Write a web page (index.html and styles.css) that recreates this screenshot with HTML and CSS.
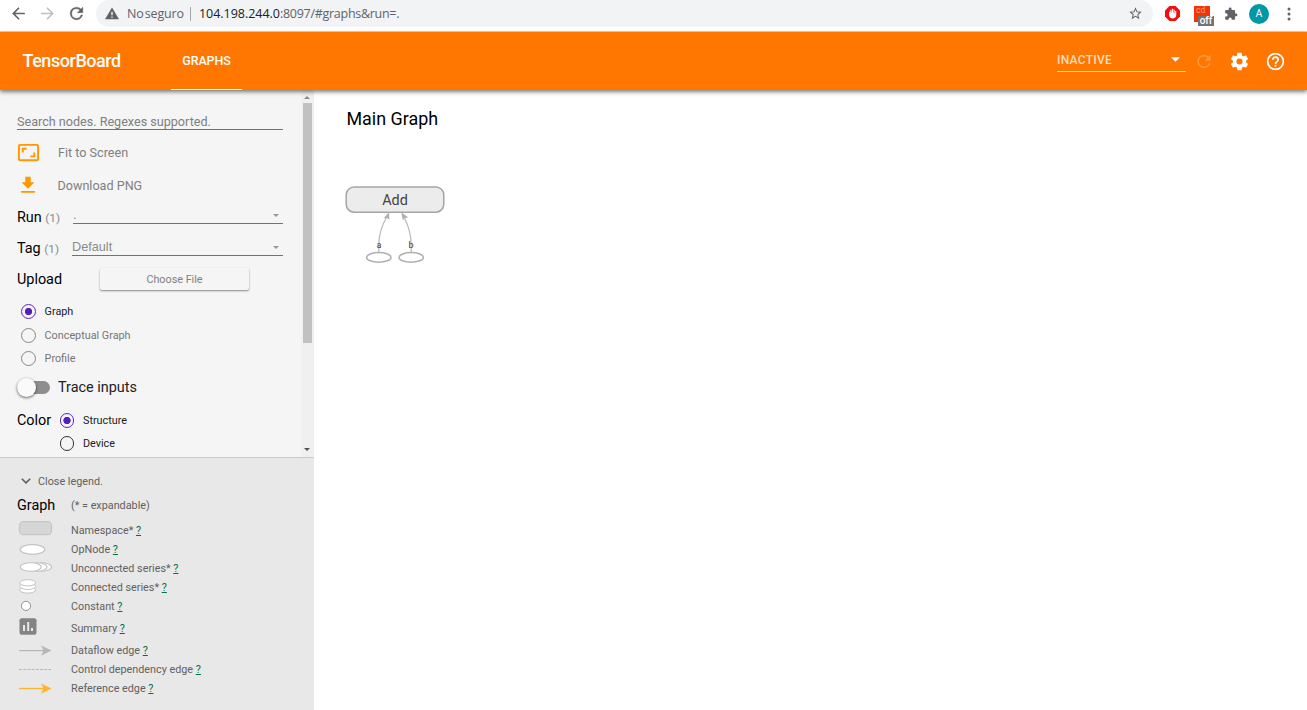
FILE: index.html
```html
<!DOCTYPE html>
<html lang="en">
<head>
<meta charset="utf-8">
<title>TensorBoard</title>
<link rel="stylesheet" href="styles.css">
</head>
<body>
<div class="browser">
  <svg class="nav-icon" viewBox="0 0 24 24"><path fill="#5f6368" d="M20 11H7.83l5.59-5.59L12 4l-8 8 8 8 1.41-1.41L7.83 13H20z"/></svg>
  <svg class="nav-icon" viewBox="0 0 24 24"><path fill="#bdc1c6" d="M12 4l-1.41 1.41L16.17 11H4v2h12.17l-5.58 5.59L12 20l8-8z"/></svg>
  <svg class="nav-icon" viewBox="0 0 24 24"><path fill="#5f6368" stroke="#5f6368" stroke-width=".5" d="M17.65 6.35A7.95 7.95 0 0 0 12 4a8 8 0 1 0 7.73 10h-2.08A6 6 0 1 1 12 6c1.66 0 3.14.69 4.22 1.78L13 11h7V4z"/></svg>
  <div class="omnibox">
    <svg class="warn" viewBox="0 0 14 13"><path fill="#5f6368" fill-rule="evenodd" d="M7 .5L14 12.3H0zM6.3 4.7v3.6h1.4V4.7zM6.3 9.4v1.4h1.4V9.4z"/></svg>
    <span class="insecure">No seguro</span>
    <span class="divider"></span>
    <span class="url"><span class="host">104.198.244.0</span><span class="rest">:8097/#graphs&amp;run=.</span></span>
    <svg class="star" viewBox="0 0 24 24"><path fill="#5f6368" d="M22 9.24l-7.19-.62L12 2 9.19 8.63 2 9.24l5.46 4.73L5.82 21 12 17.27 18.18 21l-1.63-7.03zM12 15.4l-3.76 2.27 1-4.28-3.32-2.88 4.38-.38L12 6.1l1.71 4.04 4.38.38-3.32 2.88 1 4.28z"/></svg>
  </div>
  <div class="extensions">
    <svg class="ext-hand" viewBox="0 0 16 16"><path fill="#f40d12" d="M4.7 0h6.6L16 4.7v6.6L11.3 16H4.7L0 11.3V4.7z"/><path fill="#fff" d="M4.4 6.2h1.3V4h1.2v3h.5V2.9h1.2V7h.5V3.7h1.2v3.9h.5V5.3H12v4.4c0 2.2-1.3 3.5-3.5 3.5-2.6 0-4.1-1.5-4.1-4z"/></svg>
    <span class="ext-app"><span class="app-name">cd</span><span class="app-badge">off</span></span>
    <svg class="ext-puzzle" viewBox="0 0 24 24"><path fill="#5f6368" d="M20.5 11H19V7c0-1.1-.9-2-2-2h-4V3.5a2.5 2.5 0 0 0-5 0V5H4c-1.1 0-2 .9-2 2v3.8h1.5a2.7 2.7 0 0 1 0 5.4H2V20c0 1.1.9 2 2 2h3.8v-1.5a2.7 2.7 0 0 1 5.4 0V22H17c1.1 0 2-.9 2-2v-4h1.5a2.5 2.5 0 0 0 0-5z"/></svg>
    <span class="avatar">A</span>
    <svg class="dots" viewBox="0 0 4 14"><g fill="#5f6368"><circle cx="2" cy="2" r="1.5"/><circle cx="2" cy="7" r="1.5"/><circle cx="2" cy="12" r="1.5"/></g></svg>
  </div>
</div>

<header class="toolbar">
  <div class="brand">TensorBoard</div>
  <div class="tab">GRAPHS</div>
  <div class="inactive"><span>INACTIVE</span><svg viewBox="0 0 10 5"><path fill="#fff" d="M0 0h10L5 5z"/></svg></div>
  <svg class="tool-icon faded" viewBox="0 0 24 24"><path d="M17.65 6.35A7.95 7.95 0 0 0 12 4a8 8 0 1 0 7.73 10h-2.08A6 6 0 1 1 12 6c1.66 0 3.14.69 4.22 1.78L13 11h7V4z"/></svg>
  <svg class="tool-icon" viewBox="0 0 24 24"><path d="M19.43 12.98c.04-.32.07-.64.07-.98s-.03-.66-.07-.98l2.11-1.65c.19-.15.24-.42.12-.64l-2-3.46c-.12-.22-.39-.3-.61-.22l-2.49 1c-.52-.4-1.08-.73-1.69-.98l-.38-2.65C14.46 2.18 14.25 2 14 2h-4c-.25 0-.46.18-.49.42l-.38 2.65c-.61.25-1.17.59-1.69.98l-2.49-1c-.23-.09-.49 0-.61.22l-2 3.46c-.13.22-.07.49.12.64l2.11 1.65c-.04.32-.07.65-.07.98s.03.66.07.98l-2.11 1.65c-.19.15-.24.42-.12.64l2 3.46c.12.22.39.3.61.22l2.49-1c.52.4 1.08.73 1.69.98l.38 2.65c.03.24.24.42.49.42h4c.25 0 .46-.18.49-.42l.38-2.65c.61-.25 1.17-.59 1.69-.98l2.49 1c.23.09.49 0 .61-.22l2-3.46c.12-.22.07-.49-.12-.64zM12 15.5a3.5 3.5 0 1 1 0-7 3.5 3.5 0 0 1 0 7z"/></svg>
  <svg class="tool-icon" viewBox="0 0 24 24"><path d="M11 18h2v-2h-2zm1-16a10 10 0 1 0 0 20 10 10 0 0 0 0-20zm0 18a8 8 0 1 1 0-16 8 8 0 0 1 0 16zm0-14a4 4 0 0 0-4 4h2c0-1.1.9-2 2-2s2 .9 2 2c0 2-3 1.75-3 5h2c0-2.25 3-2.5 3-5a4 4 0 0 0-4-4z"/></svg>
</header>

<div class="main">
  <aside class="sidebar">
    <div class="controls">
      <div class="panel">
        <div class="search">Search nodes. Regexes supported.</div>
        <div class="action"><svg viewBox="0 0 24 24"><path fill="#ff9800" d="M7 9h3V7H5v5h2zM19 12h-2v3h-3v2h5zM21 3H3c-1.1 0-2 .9-2 2v14c0 1.1.9 2 2 2h18c1.1 0 2-.9 2-2V5c0-1.1-.9-2-2-2zm0 16H3V5h18z"/></svg><span>Fit to Screen</span></div>
        <div class="action download"><svg viewBox="0 0 24 24"><path fill="#ff9800" d="M19 9h-4V3H9v6H5l7 7zM4.5 18.5v2h15v-2z"/></svg><span>Download PNG</span></div>
        <div class="field run"><span class="title">Run <small>(1)</small></span><div class="select"><span>.</span><svg viewBox="0 0 6 3"><path d="M0 0h6L3 3z"/></svg></div></div>
        <div class="field tag"><span class="title">Tag <small>(1)</small></span><div class="select"><span>Default</span><svg viewBox="0 0 6 3"><path d="M0 0h6L3 3z"/></svg></div></div>
        <div class="field upload"><span class="title">Upload</span><div class="file">Choose File</div></div>
        <div class="radios">
          <div class="radio on"><i></i>Graph</div>
          <div class="radio off"><i></i>Conceptual Graph</div>
          <div class="radio off"><i></i>Profile</div>
        </div>
        <div class="trace"><span class="toggle"><b></b></span>Trace inputs</div>
        <div class="color">
          <span class="title">Color</span>
          <div class="color-list">
            <div class="radio on"><i></i>Structure</div>
            <div class="radio"><i></i>Device</div>
          </div>
        </div>
      </div>
      <div class="scrollbar">
        <svg viewBox="0 0 6 3"><path fill="#8b8b8b" d="M0 3h6L3 0z"/></svg>
        <div class="thumb"></div>
        <svg viewBox="0 0 6 3"><path fill="#505050" d="M0 0h6L3 3z"/></svg>
      </div>
    </div>
    <div class="legend">
      <div class="close"><svg viewBox="0 0 10 6"><path fill="none" stroke="#616161" stroke-width="1.6" d="M.8.7L5 4.9 9.2.7"/></svg>Close legend.</div>
      <div class="legend-head"><span class="title">Graph</span><span>(* = expandable)</span></div>
      <div class="item ns"><svg viewBox="0 0 54 19"><rect x="2.5" y=".7" width="32" height="13" rx="4" fill="#d6d6d6" stroke="#c6c6c6" stroke-width="1.3"/></svg><span>Namespace* <u>?</u></span></div>
      <div class="item"><svg viewBox="0 0 54 19"><ellipse cx="15.5" cy="9.5" rx="12.3" ry="4.8" fill="#fff" stroke="#c4c4c4" stroke-width="1.2"/></svg><span>OpNode <u>?</u></span></div>
      <div class="item"><svg viewBox="0 0 54 19"><g fill="#fff" stroke="#c4c4c4" stroke-width="1.1"><ellipse cx="24" cy="8" rx="10.5" ry="4.2"/><ellipse cx="19.5" cy="8" rx="10.5" ry="4.2"/><ellipse cx="13.7" cy="8" rx="10.5" ry="4.2"/></g></svg><span>Unconnected series* <u>?</u></span></div>
      <div class="item"><svg viewBox="0 0 54 19"><g fill="#fff" stroke="#c4c4c4" stroke-width="1"><ellipse cx="10.7" cy="12" rx="8" ry="3.1"/><ellipse cx="10.7" cy="8.4" rx="8" ry="3.1"/><ellipse cx="10.7" cy="4.8" rx="8" ry="3.1"/></g></svg><span>Connected series* <u>?</u></span></div>
      <div class="item"><svg viewBox="0 0 54 19"><circle cx="9" cy="8.9" r="4.6" fill="#fff" stroke="#888" stroke-width=".9"/></svg><span>Constant <u>?</u></span></div>
      <div class="item summary"><svg viewBox="0 0 54 25"><rect x="2.5" y="2.3" width="17" height="16.5" rx="2" fill="#848484"/><path fill="#e8e8e8" d="M6 9h2v6H6zM10.2 6h2v9h-2zM14 12h2v3h-2z"/></svg><span>Summary <u>?</u></span></div>
      <div class="item"><svg viewBox="0 0 54 19"><path d="M2 9.6h26" stroke="#b7b7b7" stroke-width="1.2"/><path fill="#b7b7b7" d="M24 4.5l10.5 5.1L24 14.8l2.5-5.2z"/></svg><span>Dataflow edge <u>?</u></span></div>
      <div class="item"><svg viewBox="0 0 54 19"><path d="M2 9.5h32" stroke="#b7b7b7" stroke-width="1" stroke-dasharray="3 1.2"/></svg><span>Control dependency edge <u>?</u></span></div>
      <div class="item"><svg viewBox="0 0 54 19"><path d="M2 9.5h26" stroke="#ffb430" stroke-width="1.3"/><path fill="#ffb430" d="M24 4.4l10.5 5.1L24 14.7l2.5-5.2z"/></svg><span>Reference edge <u>?</u></span></div>
    </div>
  </aside>
  <section class="canvas">
    <h1>Main Graph</h1>
    <svg class="graph" viewBox="0 0 110 90">
      <rect x="5.2" y="7" width="97.6" height="25.2" rx="8" fill="#ececec" stroke="#a5a5a5" stroke-width="1.5"/>
      <text class="node" x="54" y="25" text-anchor="middle">Add</text>
      <g fill="none" stroke="#b7b7b7" stroke-width="1.2"><path d="M37.8 72V65Q38 50 45.8 37"/><path d="M70.2 72V65Q70 50 62.9 37"/></g>
      <path fill="#b0b0b0" d="M48 32.2l.4 7.3-2.7-1.4-3.2.1zM60.3 32.2l7 5.2-3.3.7-2.3 2z"/>
      <g fill="#fff" stroke="#b0b0b0" stroke-width="1.5"><ellipse cx="37.8" cy="77.4" rx="12.2" ry="4.8"/><ellipse cx="70.2" cy="77.4" rx="12.2" ry="4.8"/></g>
      <text class="leaf" x="38" y="68" text-anchor="middle">a</text>
      <text class="leaf" x="70" y="68" text-anchor="middle">b</text>
    </svg>
  </section>
</div>
</body>
</html>
```

FILE: styles.css
```css
* { box-sizing: border-box; }
body { margin: 0; width: 1307px; height: 710px; overflow: hidden; display: flex; flex-direction: column; font-family: Roboto, sans-serif; background: #fff; color: #212121; }
svg { display: block; flex: none; }

.browser { height: 32px; flex: none; display: flex; align-items: center; padding: 0 0 4px 9px; border-bottom: 1px solid #d5d5d6; }
.nav-icon { width: 19px; height: 19px; margin-right: 10px; }
.omnibox { width: 1057px; height: 27px; border-radius: 14px; background: #f1f3f4; display: flex; align-items: center; padding: 0 10px 0 9px; font: 12.5px "Open Sans", "Noto Sans", sans-serif; color: #5f6368; white-space: nowrap; }
.warn { width: 14px; height: 13px; margin-right: 8px; }
.insecure { width: 63px; letter-spacing: -.15px; word-spacing: -2px; }
.divider { width: 1px; height: 14px; background: #a3a7ab; margin-right: 8px; }
.url { flex: 1; }
.host { color: #202124; letter-spacing: -.03px; }
.rest { letter-spacing: -.28px; }
.star { width: 15px; height: 15px; }
.extensions { display: flex; align-items: center; flex: 1; padding-left: 12px; }
.ext-hand { width: 15px; height: 15px; margin-right: 14px; }
.ext-app { position: relative; width: 16px; height: 16px; margin-right: 14px; background: #f4330b; color: #ff9a62; font: 8.5px/8px Roboto, sans-serif; }
.app-name { display: block; padding-left: 2px; }
.app-badge { position: absolute; left: 4px; top: 10px; width: 16px; height: 10px; background: #737373; color: #fff; font: 500 10px/10px Roboto, sans-serif; text-align: center; }
.ext-puzzle { width: 14px; height: 14px; margin-right: 11px; }
.avatar { width: 20px; height: 20px; border-radius: 50%; background: #0097a7; color: #fff; font-size: 10.5px; line-height: 20px; text-align: center; margin-right: 18px; }
.dots { width: 4px; height: 14px; }

.toolbar { position: relative; z-index: 1; height: 58px; flex: none; background: #ff7700; color: #fff; display: flex; align-items: center; padding: 0 21px 0 22.5px; box-shadow: 0 2px 4px rgba(0,0,0,.5); }
.brand { width: 148.5px; font-size: 18px; font-weight: 500; letter-spacing: -.45px; padding-bottom: 1px; }
.tab { width: 71px; height: 58px; line-height: 58px; font-size: 12.5px; font-weight: 500; text-align: center; border-bottom: 1px solid #fff; letter-spacing: -.1px; }
.inactive { margin-left: auto; width: 129px; height: 23px; margin-bottom: 2px; border-bottom: 1px solid #ffdcb9; display: flex; align-items: center; justify-content: space-between; padding-right: 6px; font-size: 12px; color: #ffdcbb; font-weight: 500; letter-spacing: .3px; }
.inactive svg { width: 9px; height: 5px; }
.tool-icon { width: 21px; height: 21px; fill: #fff; margin-left: 15px; }
.faded { opacity: .25; margin-left: 8px; width: 20px; }

.main { flex: 1; display: flex; min-height: 0; }
.sidebar { width: 314px; display: flex; flex-direction: column; }
.controls { height: 368px; flex: none; display: flex; background: #f5f5f5; border-bottom: 1px solid #cacaca; }
.panel { width: 301px; padding-left: 17px; }
.title { font-size: 14.4px; color: #000; }
.title small { font-size: 11.8px; color: #8c8c8c; }
.search { width: 266px; height: 40px; padding-top: 24px; border-bottom: 1px solid #727272; font-size: 12.6px; line-height: 15px; color: #808080; }
.action { height: 31px; margin-top: 7px; display: flex; align-items: center; font-size: 12.6px; color: #808080; }
.action svg { width: 23px; height: 23px; margin-right: 18px; }
.download { height: 34px; margin-top: 0; }
.download svg { width: 22px; height: 22px; margin-right: 18.5px; }
.field { display: flex; align-items: center; width: 266px; }
.field .title { flex: none; width: 56px; }
.run { height: 30px; }
.run .select { margin-bottom: 2px; }
.tag { height: 32px; }
.tag .title { width: 55px; }
.select { flex: 1; height: 16px; border-bottom: 1px solid #727272; display: flex; align-items: center; justify-content: space-between; padding: 0 4px 1px 0; font: 12.7px/13px "Liberation Sans", sans-serif; color: #8b8b8b; }
.select svg { width: 6px; height: 3px; fill: #999; }
.upload { height: 30px; }
.upload .title { width: 83px; }
.file { width: 149px; height: 22px; border-radius: 2px; background: #f5f5f5; box-shadow: 0 1px 2px rgba(0,0,0,.45); font-size: 10.8px; line-height: 23px; text-align: center; color: #808080; }
.radios { padding: 6px 0 0 4px; }
.radio { height: 23.4px; display: flex; align-items: center; font-size: 10.8px; color: #212121; }
.radio i { width: 15px; height: 15px; border: 1px solid #333; border-radius: 50%; margin-right: 8.6px; }
.radio.on i { border: 1.4px solid #5a28c4; background: radial-gradient(circle, #5320b9 3.3px, transparent 4px); }
.radio.off { color: #757575; }
.radio.off i { border-color: #888; }
.trace { height: 34px; display: flex; align-items: center; font-size: 14.4px; }
.toggle { width: 33px; height: 13px; border-radius: 7px; background: #8e8e8e; margin-right: 8px; display: flex; align-items: center; }
.toggle b { width: 19px; height: 19px; border-radius: 50%; background: #fafafa; box-shadow: 0 1px 3px rgba(0,0,0,.6); }
.color { display: flex; padding-top: 4.6px; }
.color .title { width: 42.5px; line-height: 23px; }
.color .radio { height: 23px; }
.color .radio i { margin-right: 9px; width: 14.5px; height: 14.5px; }
.scrollbar { width: 13px; background: #f0f0f0; display: flex; flex-direction: column; align-items: center; padding: 6px 1px 6px 0; }
.scrollbar svg { width: 6px; height: 3px; }
.thumb { width: 9px; height: 240px; margin: 4px -1px auto 0; background: #c1c1c1; }

.legend { flex: 1; background: #e8e8e8; padding: 11px 0 0 17px; font-size: 10.8px; color: #616161; }
.close { height: 24px; display: flex; align-items: center; padding-left: 4px; }
.close svg { width: 10px; height: 6px; margin-right: 7px; }
.legend-head { height: 24px; display: flex; align-items: center; margin-bottom: 4px; }
.legend-head .title { width: 54px; }
.item { height: 19px; display: flex; align-items: center; }
.item svg { width: 54px; height: 19px; }
.item u { color: #00703c; text-underline-offset: 1px; }
.summary { height: 25px; }
.summary svg { height: 25px; }

.canvas { flex: 1; padding: 18px 0 0 27px; }
.canvas h1 { margin: 0 0 0 5.5px; height: 22px; font-size: 17.9px; line-height: 22px; font-weight: 400; color: #000; }
.graph { width: 110px; height: 90px; margin-top: 50px; }
.node { font-size: 14.4px; fill: #454545; }
.leaf { font-size: 9px; fill: #424242; }
```
